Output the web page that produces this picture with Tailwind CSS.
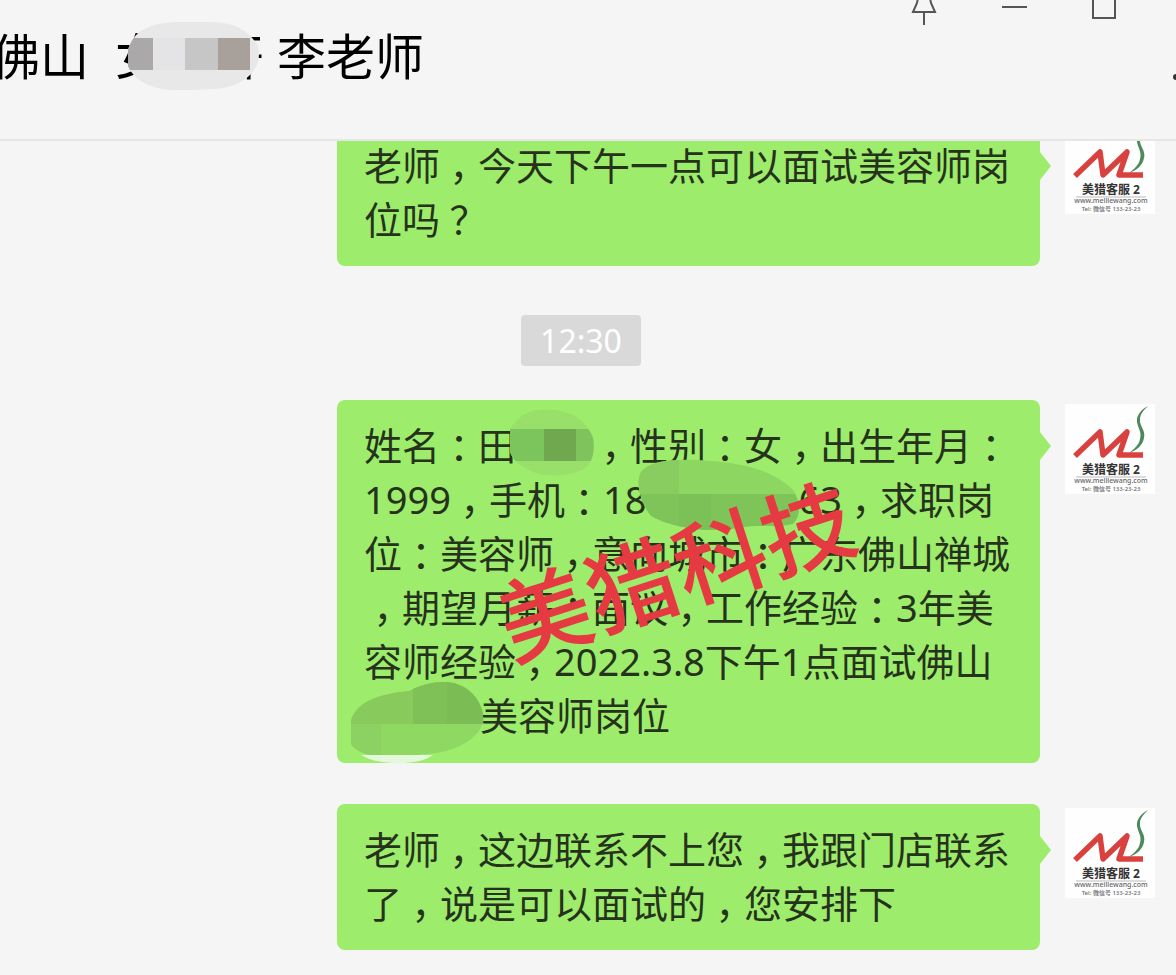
<!DOCTYPE html>
<html lang="zh-CN">
<head>
<meta charset="utf-8">
<meta name="viewport" content="width=device-width, initial-scale=1">
<title>李老师</title>
<script src="https://cdn.jsdelivr.net/npm/@tailwindcss/browser@4"></script>
</head>
<body class="bg-[#f5f5f5] font-['Noto_Sans','Noto_Sans_CJK_SC',sans-serif]">

<svg class="hidden" aria-hidden="true">
  <symbol id="logo" viewBox="0 0 90 90">
    <rect width="90" height="90" fill="#fefefe"/>
    <path d="M83 2C77 5 71 11 72 18C73 24 77 28 75 35C74 41 69 45 64 49C71 47 78 41 79 34C81 26 74 22 75 15C75 10 79 6 83 2Z" fill="#4c8a5c"/>
    <path d="M10 52L35 28L38 51L62 28L54 51H78" fill="none" stroke="#d9413e" stroke-width="5.500" stroke-linejoin="round"/>
    <text x="46" y="70" text-anchor="middle" font-size="12" font-weight="700" fill="#333">美猎客服 2</text>
    <path d="M11 73H81" stroke="#bbb" stroke-width="1"/>
    <text x="46" y="79" text-anchor="middle" font-size="7" font-weight="500" fill="#666">www.meiliewang.com</text>
    <text x="46" y="87" text-anchor="middle" font-size="6" font-weight="500" fill="#666">Tel: 微信号 133-23-23</text>
  </symbol>
</svg>

<div class="flex h-screen flex-col overflow-hidden">
  <header class="flex h-[141px] shrink-0 justify-between border-b-2 border-[#e6e6e6]">
    <h1 class="relative -ml-[9px] flex pt-[26px] text-[49px] leading-[60px] whitespace-pre text-black">
      <span>佛山</span><span class="ml-[26px]">女</span><span class="ml-[51px]">开</span><span class="ml-[13px]">李老师</span>
      <svg class="absolute top-[20px] left-[134px]" width="140" height="72" viewBox="0 0 140 72" aria-hidden="true">
        <defs><clipPath id="m0"><path d="M3 30C8 12 22 3 52 2H88C110 3 122 10 132 24C136 34 134 46 126 54C112 68 98 69 70 70H44C22 68 8 58 3 46Z"/></clipPath></defs>
        <g clip-path="url(#m0)">
          <rect width="140" height="72" fill="#e8e8e8"/>
          <rect y="18" width="28" height="32" fill="#aaa8a8"/>
          <rect x="28" y="18" width="32" height="32" fill="#e4e4e6"/>
          <rect x="60" y="18" width="33" height="32" fill="#c6c6c6"/>
          <rect x="93" y="18" width="32" height="32" fill="#a8a19b"/>
        </g>
      </svg>
    </h1>
    <div class="flex flex-col items-end">
      <div class="flex pr-[27px] text-[#555]">
        <button type="button" aria-label="置顶" class="flex w-[90px] justify-center">
          <svg width="26" height="26" viewBox="0 0 26 26" fill="none" stroke="currentColor" stroke-width="2"><path d="M7 -2L6 3L2 12H24L20 3L19 -2M13 12V25"/></svg>
        </button>
        <button type="button" aria-label="最小化" class="flex w-[90px] justify-center">
          <svg width="26" height="26" viewBox="0 0 26 26" fill="none" stroke="currentColor" stroke-width="2"><path d="M1 7H26"/></svg>
        </button>
        <button type="button" aria-label="最大化" class="flex w-[90px] justify-center">
          <svg width="26" height="26" viewBox="0 0 26 26" fill="none" stroke="currentColor" stroke-width="2"><path d="M2 -4V18H24V-4"/></svg>
        </button>
      </div>
      <button type="button" aria-label="更多" class="mt-[46px]">
        <svg width="4" height="10" viewBox="0 0 4 10"><circle cx="4" cy="5" r="3" fill="#333"/></svg>
      </button>
    </div>
  </header>

  <main class="flex-1 overflow-hidden text-[38px] leading-[54px] text-[#26331c]">
    <section class="-mt-[21px] flex items-start justify-end gap-[25px] pr-[21px]">
      <div class="relative w-[703px] rounded-lg bg-[#9eec6c] pt-[18px] pb-5 pl-[27px] whitespace-nowrap">
        <p>老师<span class="inline-block w-[38px] text-center [font-feature-settings:'halt']">，</span>今天下午一点可以面试美容师岗</p>
        <p>位吗<span class="inline-block w-[38px] text-center [font-feature-settings:'halt']">？</span></p>
        <svg class="absolute top-[32px] left-full" width="11" height="28" viewBox="0 0 11 28" aria-hidden="true"><path d="M0 0L11 14L0 28Z" fill="#9eec6c"/></svg>
      </div>
      <svg class="mt-1 size-[90px] shrink-0" role="img" aria-label="美猎客服 2"><use href="#logo"/></svg>
    </section>

    <div class="mt-[49px] mb-[34px] flex justify-center pr-[14px]">
      <time class="rounded-sm bg-[#d9d9d9] px-[19px] text-[32px] leading-[51px] text-white">12:30</time>
    </div>

    <section class="flex items-start justify-end gap-[25px] pr-[21px]">
      <div class="relative w-[703px] rounded-lg bg-[#9eec6c] pt-[18px] pb-[21px] pl-[27px] whitespace-nowrap">
        <p>姓名<span class="inline-block w-[38px] text-center [font-feature-settings:'halt']">：</span>田<span class="inline-block w-[76px]"></span><span class="inline-block w-[38px] text-center [font-feature-settings:'halt']">，</span>性别<span class="inline-block w-[38px] text-center [font-feature-settings:'halt']">：</span>女<span class="inline-block w-[38px] text-center [font-feature-settings:'halt']">，</span>出生年月<span class="inline-block w-[38px] text-center [font-feature-settings:'halt']">：</span></p>
        <p>1999<span class="inline-block w-[38px] text-center [font-feature-settings:'halt']">，</span>手机<span class="inline-block w-[38px] text-center [font-feature-settings:'halt']">：</span>18<span class="inline-block w-[152px]"></span>63<span class="inline-block w-[38px] text-center [font-feature-settings:'halt']">，</span>求职岗</p>
        <p>位<span class="inline-block w-[38px] text-center [font-feature-settings:'halt']">：</span>美容师<span class="inline-block w-[38px] text-center [font-feature-settings:'halt']">，</span>意向城市<span class="inline-block w-[38px] text-center [font-feature-settings:'halt']">：</span>广东佛山禅城</p>
        <p><span class="inline-block w-[38px] text-center [font-feature-settings:'halt']">，</span>期望月薪<span class="inline-block w-[38px] text-center [font-feature-settings:'halt']">：</span>面议<span class="inline-block w-[38px] text-center [font-feature-settings:'halt']">，</span>工作经验<span class="inline-block w-[38px] text-center [font-feature-settings:'halt']">：</span>3年美</p>
        <p>容师经验<span class="inline-block w-[38px] text-center [font-feature-settings:'halt']">，</span>2022.3.8下午1点面试佛山</p>
        <p><span class="inline-block w-[116px]"></span>美容师岗位</p>

        <svg class="absolute top-0 left-0" width="703" height="363" viewBox="0 0 703 363" aria-hidden="true">
          <defs>
            <clipPath id="m1"><path d="M173 29C182 14 194 8 216 10C238 12 250 22 256 38C258 50 256 62 248 68C236 76 210 78 196 72C182 66 176 60 173 52Z"/></clipPath>
            <clipPath id="m2"><path d="M304 72C312 62 330 59 360 60C400 62 434 68 456 90C464 102 464 116 456 124C440 128 420 124 400 128C370 134 330 126 314 116C304 104 298 84 304 72Z"/></clipPath>
            <clipPath id="m3"><path d="M14 320C20 302 40 294 72 291C90 282 106 280 120 284C138 290 148 308 146 322C142 338 120 352 90 354C60 358 24 360 14 344Z"/></clipPath>
          </defs>
          <g clip-path="url(#m1)">
            <rect x="170" width="90" height="80" fill="#98e069"/>
            <rect x="170" y="29" width="37" height="32" fill="#7cc55c"/>
            <rect x="207" y="29" width="32" height="32" fill="#70a84f"/>
            <rect x="239" y="29" width="20" height="32" fill="#7fc35c"/>
          </g>
          <g clip-path="url(#m2)">
            <rect x="296" y="56" width="170" height="38" fill="#8dd661"/>
            <rect x="296" y="56" width="46" height="38" fill="#89cc60"/>
            <rect x="296" y="94" width="170" height="36" fill="#7fc459"/>
            <rect x="342" y="94" width="32" height="36" fill="#7cc058"/>
          </g>
          <g clip-path="url(#m3)">
            <rect x="10" y="278" width="140" height="46" fill="#88cb5c"/>
            <rect x="76" y="278" width="34" height="46" fill="#7fc156"/>
            <rect x="110" y="278" width="40" height="46" fill="#7bbc54"/>
            <rect x="10" y="324" width="140" height="36" fill="#8fd862"/>
            <rect x="10" y="324" width="34" height="36" fill="#8bd262"/>
          </g>
          <path d="M24 355H96C88 361 76 363 62 363C46 363 34 361 24 355Z" fill="#e4f8dc"/>
        </svg>

        <div class="absolute top-[171px] left-[339px] -translate-x-1/2 -translate-y-1/2 -rotate-[18deg] text-[92px] leading-none font-medium text-[#e63a43]">美猎科技</div>
        <svg class="absolute top-[32px] left-full" width="11" height="28" viewBox="0 0 11 28" aria-hidden="true"><path d="M0 0L11 14L0 28Z" fill="#9eec6c"/></svg>
      </div>
      <svg class="mt-1 size-[90px] shrink-0" role="img" aria-label="美猎客服 2"><use href="#logo"/></svg>
    </section>

    <section class="mt-[41px] flex items-start justify-end gap-[25px] pr-[21px]">
      <div class="relative w-[703px] rounded-lg bg-[#9eec6c] pt-[18px] pb-5 pl-[27px] whitespace-nowrap">
        <p>老师<span class="inline-block w-[38px] text-center [font-feature-settings:'halt']">，</span>这边联系不上您<span class="inline-block w-[38px] text-center [font-feature-settings:'halt']">，</span>我跟门店联系</p>
        <p>了<span class="inline-block w-[38px] text-center [font-feature-settings:'halt']">，</span>说是可以面试的<span class="inline-block w-[38px] text-center [font-feature-settings:'halt']">，</span>您安排下</p>
        <svg class="absolute top-[32px] left-full" width="11" height="28" viewBox="0 0 11 28" aria-hidden="true"><path d="M0 0L11 14L0 28Z" fill="#9eec6c"/></svg>
      </div>
      <svg class="mt-1 size-[90px] shrink-0" role="img" aria-label="美猎客服 2"><use href="#logo"/></svg>
    </section>
  </main>
</div>
</body>
</html>
